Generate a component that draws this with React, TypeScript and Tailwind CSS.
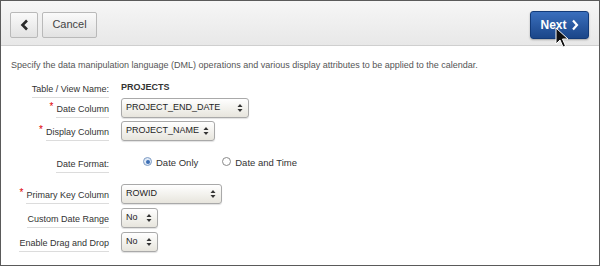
import React from 'react';

const font = { fontFamily: '"Liberation Sans", Arial, sans-serif' };

const Arrows: React.FC = () => (
  <svg width="6" height="10" viewBox="0 0 6 10" className="shrink-0">
    <path d="M3 1 L5.5 4 H0.5 Z" fill="#333" />
    <path d="M3 9 L5.5 6 H0.5 Z" fill="#333" />
  </svg>
);

const Select: React.FC<{ value: string; width: string }> = ({ value, width }) => (
  <div
    className={`${width} h-[20px] flex items-center justify-between pl-[4px] pr-[5px] rounded-[3px] border border-[#a9a9a9] bg-gradient-to-b from-[#ffffff] to-[#e7e5dd] shadow-[0_1px_1px_rgba(0,0,0,0.12)] text-[9px] text-[#1e1e1e]`}
  >
    <span>{value}</span>
    <Arrows />
  </div>
);

const Label: React.FC<{ text: string; required?: boolean }> = ({ text, required }) => (
  <div className="flex justify-end items-center translate-y-[3px]">
    {required && <span className="text-[#e00000] text-[10px] leading-none mr-[3px] -mt-[8px]">*</span>}
    <span className="text-[9px] text-[#333] border-b border-[#dcdcdc] pb-[2px] leading-[11px]">{text}</span>
  </div>
);

const Radio: React.FC<{ checked?: boolean; label: string }> = ({ checked, label }) => (
  <div className="flex items-center gap-[4px]">
    <span
      className={`w-[9px] h-[9px] rounded-full border flex items-center justify-center -mt-[3px] ${
        checked ? 'border-[#7f9cc4] bg-[#dfe9f6]' : 'border-[#8a8a8a] bg-white'
      }`}
    >
      {checked && <span className="w-[4px] h-[4px] rounded-full bg-[#3c6eb4]" />}
    </span>
    <span className="text-[9.5px] text-[#333]">{label}</span>
  </div>
);

const Row: React.FC<{ mt: string; children: React.ReactNode }> = ({ mt, children }) => (
  <div className={`grid grid-cols-[98px_1fr] gap-x-[12px] h-[20px] items-center ${mt}`}>{children}</div>
);

export default function App() {
  return (
    <div style={font} className="relative w-[600px] h-[266px] overflow-hidden bg-white border border-[#5a5a5a]">
      {/* Header */}
      <div className="h-[45px] flex items-center justify-between pl-[9px] pr-[10px] bg-gradient-to-b from-[#f6f6f6] to-[#e8e8e8] border-b border-[#cfcfcf]">
        <div className="flex items-center gap-[4px] mt-[3px]">
          <button className="w-[28px] h-[26px] flex items-center justify-center rounded-[2px] border border-[#b9b9b9] bg-gradient-to-b from-[#fafafa] to-[#e2e2e2]">
            <svg width="9" height="12" viewBox="0 0 9 12">
              <path d="M7 1.5 L2.5 6 L7 10.5" stroke="#2a2a2a" strokeWidth="2.6" fill="none" strokeLinejoin="miter" />
            </svg>
          </button>
          <button className="w-[55px] h-[26px] flex items-center justify-center rounded-[2px] border border-[#b9b9b9] bg-gradient-to-b from-[#fafafa] to-[#e2e2e2] text-[11px] text-[#444]">
            Cancel
          </button>
        </div>
        <button className="w-[59px] h-[28px] flex items-center justify-center gap-[4px] rounded-[3px] border border-[#123a78] bg-gradient-to-b from-[#3a6fbd] to-[#1b4689] text-white text-[12px] font-bold shadow-[0_1px_2px_rgba(0,0,0,0.3)] mt-[3px]">
          Next
          <svg width="8" height="12" viewBox="0 0 8 12">
            <path d="M2 1.5 L6 6 L2 10.5" stroke="#ffffff" strokeWidth="2.2" fill="none" />
          </svg>
        </button>
      </div>

      {/* Body */}
      <div className="pl-[10px] pt-[13px]">
        <p className="text-[9px] leading-[12px] text-[#555]">
          Specify the data manipulation language (DML) operations and various display attributes to be applied to the calendar.
        </p>

        <Row mt="mt-[7px]">
          <Label text="Table / View Name:" />
          <span className="text-[9px] font-bold text-[#333]">PROJECTS</span>
        </Row>
        <Row mt="mt-0">
          <Label text="Date Column" required />
          <Select value="PROJECT_END_DATE" width="w-[128px]" />
        </Row>
        <Row mt="mt-[3px]">
          <Label text="Display Column" required />
          <Select value="PROJECT_NAME" width="w-[94px]" />
        </Row>
        <Row mt="mt-[12px]">
          <Label text="Date Format:" />
          <div className="flex items-center gap-[24px] pl-[22px]">
            <Radio checked label="Date Only" />
            <Radio label="Date and Time" />
          </div>
        </Row>
        <Row mt="mt-[11px]">
          <Label text="Primary Key Column" required />
          <Select value="ROWID" width="w-[101px]" />
        </Row>
        <Row mt="mt-[4px]">
          <Label text="Custom Date Range" />
          <Select value="No" width="w-[37px]" />
        </Row>
        <Row mt="mt-[4px]">
          <Label text="Enable Drag and Drop" />
          <Select value="No" width="w-[37px]" />
        </Row>
      </div>

      {/* Mouse cursor */}
      <svg className="absolute left-[554px] top-[26px]" width="14" height="22" viewBox="0 0 14 22">
        <path d="M1 1 L1 17 L5 13 L8 20 L10.5 19 L7.5 12 L13 12 Z" fill="#111" stroke="#fff" strokeWidth="1" />
      </svg>
    </div>
  );
}
